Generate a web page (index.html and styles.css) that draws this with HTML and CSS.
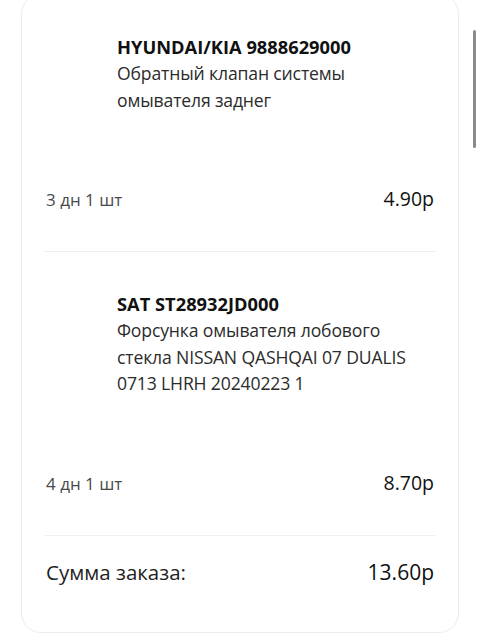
FILE: index.html
```html
<!DOCTYPE html>
<html lang="ru">
<head>
<meta charset="utf-8">
<link rel="stylesheet" href="styles.css">
</head>
<body>
<div class="page">
  <div class="card">
    <div class="item">
      <div class="info">
        <div class="title">HYUNDAI/KIA 9888629000</div>
        <div class="desc">Обратный клапан системы<br>омывателя заднег</div>
      </div>
      <div class="meta">
        <span class="qty">3 дн 1 шт</span>
        <span class="price">4.90р</span>
      </div>
    </div>
    <div class="divider"></div>
    <div class="item">
      <div class="info">
        <div class="title">SAT ST28932JD000</div>
        <div class="desc">Форсунка омывателя лобового<br>стекла NISSAN QASHQAI 07 DUALIS<br>0713 LHRH 20240223 1</div>
      </div>
      <div class="meta">
        <span class="qty">4 дн 1 шт</span>
        <span class="price">8.70р</span>
      </div>
    </div>
    <div class="divider"></div>
    <div class="total">
      <span class="total-label">Сумма заказа:</span>
      <span class="total-value">13.60р</span>
    </div>
  </div>
</div>
<div class="scrollbar"></div>
</body>
</html>
```
FILE: styles.css
```css
html, body {
  margin: 0;
  padding: 0;
  background: #ffffff;
  overflow: hidden;
}
body {
  width: 480px;
  height: 640px;
  font-family: "Open Sans", "Noto Sans", sans-serif;
  color: #111;
}
.page {
  padding: 0 21px;
}
.card {
  margin-top: -6px;
  border: 1px solid #ececec;
  border-radius: 20px;
  background: #fff;
}
.item {
  padding: 38px 24px 38px;
}
.info {
  padding-left: 71px;
}
.title {
  font-size: 18.3px;
  line-height: 27px;
  font-weight: 700;
  color: #111;
}
.desc {
  font-size: 17.6px;
  line-height: 26.5px;
  color: #2b2b2b;
  letter-spacing: -0.15px;
}
.meta {
  margin-top: 73px;
  display: flex;
  justify-content: space-between;
  align-items: baseline;
  line-height: 26px;
}
.qty {
  font-size: 17px;
  color: #4a4a4a;
}
.price {
  font-size: 19.5px;
  color: #111;
}
.divider {
  height: 1px;
  margin: 0 23px;
  background: #eeeeee;
}
.total {
  padding: 23px 24px 47px;
  display: flex;
  justify-content: space-between;
  align-items: baseline;
  line-height: 26px;
}
.total-label {
  font-size: 20.5px;
  color: #1e1e1e;
}
.total-value {
  font-size: 21px;
  color: #111;
}
.scrollbar {
  position: fixed;
  left: 473px;
  top: 30px;
  width: 3px;
  height: 118px;
  border-radius: 2px;
  background: #8a8a8a;
}
```
